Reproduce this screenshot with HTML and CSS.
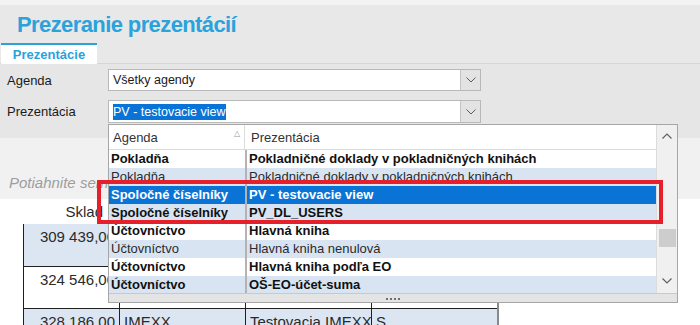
FILE: index.html
```html
<!DOCTYPE html>
<html lang="sk">
<head>
  <meta charset="UTF-8" />
  <title>Prezeranie prezentácií</title>
  <link rel="stylesheet" href="styles.css">
</head>
<body>

  <div class="topstrip"></div>
  <header class="titlebar">
    <h1>Prezeranie prezentácií</h1>
  </header>

  <nav class="tabs">
    <div class="tab">Prezentácie</div>
  </nav>

  <section class="filters">
    <div class="field">
      <label>Agenda</label>
      <div class="combo">
        <span class="combo-text">Všetky agendy</span>
        <span class="combo-btn">
          <svg width="10" height="6" viewBox="0 0 10 6"><polyline points="0.5,0.5 5,5 9.5,0.5" fill="none" stroke="#5a5a5a" stroke-width="1"/></svg>
        </span>
      </div>
    </div>
    <div class="field">
      <label>Prezentácia</label>
      <div class="combo combo-tall">
        <span class="combo-text"><span class="selected-text">PV - testovacie view</span></span>
        <span class="combo-btn">
          <svg width="10" height="6" viewBox="0 0 10 6"><polyline points="0.5,0.5 5,5 9.5,0.5" fill="none" stroke="#5a5a5a" stroke-width="1"/></svg>
        </span>
      </div>
    </div>
  </section>

  <div class="group-panel">Potiahnite sem hlavičku stĺpca pre zoskupenie</div>

  <div class="grid-wrap">
    <table class="grid">
      <colgroup>
        <col class="c-num"><col class="c-txt"><col class="c-txt"><col class="c-txt">
      </colgroup>
      <thead>
        <tr><th class="num-head">Sklad Info</th><th></th><th></th><th></th></tr>
      </thead>
      <tbody>
        <tr class="alt"><td class="num">309 439,00</td><td>IMEXX</td><td>Testovacia IMEXX</td><td>S</td></tr>
        <tr><td class="num">324 546,00</td><td>IMEXX</td><td>Testovacia IMEXX</td><td>S</td></tr>
        <tr class="alt"><td class="num">328 186,00</td><td>IMEXX</td><td>Testovacia IMEXX</td><td>S</td></tr>
      </tbody>
    </table>
  </div>

  <!-- otvoreny zoznam prezentacii -->
  <div class="dropdown">
    <div class="dd-main">
      <div class="dd-list">
        <div class="dd-head">
          <div class="dd-col1">Agenda <span class="sort">&#9651;</span></div>
          <div class="dd-col2">Prezentácia</div>
        </div>
        <div class="dd-row bold">
          <div class="dd-col1">Pokladňa</div><div class="dd-col2">Pokladničné doklady v pokladničných knihách</div>
        </div>
        <div class="dd-row odd">
          <div class="dd-col1">Pokladňa</div><div class="dd-col2">Pokladničné doklady v pokladničných knihách</div>
        </div>
        <div class="dd-row bold active">
          <div class="dd-col1">Spoločné číselníky</div><div class="dd-col2">PV - testovacie view</div>
        </div>
        <div class="dd-row bold odd">
          <div class="dd-col1">Spoločné číselníky</div><div class="dd-col2">PV_DL_USERS</div>
        </div>
        <div class="dd-row bold">
          <div class="dd-col1">Účtovníctvo</div><div class="dd-col2">Hlavná kniha</div>
        </div>
        <div class="dd-row odd">
          <div class="dd-col1">Účtovníctvo</div><div class="dd-col2">Hlavná kniha nenulová</div>
        </div>
        <div class="dd-row bold">
          <div class="dd-col1">Účtovníctvo</div><div class="dd-col2">Hlavná kniha podľa EO</div>
        </div>
        <div class="dd-row bold odd">
          <div class="dd-col1">Účtovníctvo</div><div class="dd-col2">OŠ-EO-účet-suma</div>
        </div>
      </div>
      <div class="scrollbar">
        <svg class="arrow" width="10" height="6" viewBox="0 0 10 6"><polyline points="0.5,5.5 5,1 9.5,5.5" fill="none" stroke="#606060" stroke-width="1.2"/></svg>
        <div class="thumb"></div>
        <svg class="arrow" width="10" height="6" viewBox="0 0 10 6"><polyline points="0.5,0.5 5,5 9.5,0.5" fill="none" stroke="#606060" stroke-width="1.2"/></svg>
      </div>
    </div>
    <div class="dd-foot"><span class="grip"></span></div>
  </div>

  <div class="highlight"></div>

</body>
</html>
```

FILE: styles.css
```css
body {
  margin: 0;
  width: 700px;
  height: 325px;
  overflow: hidden;
  position: relative;
  font-family: "Liberation Sans", Arial, sans-serif;
  background-color: #ffffff;
  color: #1a1a1a;
}

.topstrip {
  height: 5px;
  background-color: #f3f3f3;
}

.titlebar {
  height: 36px;
  box-sizing: border-box;
  padding-top: 3px;
  background-color: #e8e8e8;
}

.titlebar h1 {
  margin: 0;
  padding-left: 17px;
  font-size: 22px;
  line-height: 33px;
  letter-spacing: -0.6px;
  color: #2aa2dc;
}

.tabs {
  height: 22px;
  background-color: #e8e8e8;
  border-bottom: 1px solid #d6d6d6;
  display: flex;
  align-items: flex-end;
}

.tab {
  margin-left: 1px;
  width: 96px;
  height: 21px;
  margin-bottom: -1px;
  box-sizing: border-box;
  border-top: 2px solid #2aa2dc;
  background-color: #ffffff;
  color: #2aa2dc;
  font-weight: bold;
  font-size: 13px;
  line-height: 20px;
  text-align: center;
}

.filters {
  height: 74px;
  box-sizing: border-box;
  padding-top: 5px;
  background-color: #e6e6e6;
  display: flex;
  flex-direction: column;
  gap: 9px;
}

.field {
  display: flex;
  align-items: center;
}

.field label {
  width: 101px;
  padding-left: 7px;
  font-size: 13px;
  color: #1a1a1a;
}

.combo {
  width: 373px;
  height: 22px;
  box-sizing: border-box;
  border: 1px solid #b9b9b9;
  background-color: #ffffff;
  display: flex;
  align-items: center;
}

.combo-tall {
  height: 23px;
}

.combo-text {
  flex: 1;
  padding-left: 4px;
  font-size: 12.5px;
}

.selected-text {
  background-color: #0a74d6;
  color: #ffffff;
  padding: 1px 0;
}

.combo-btn {
  width: 20px;
  height: 100%;
  box-sizing: border-box;
  border-left: 1px solid #c4c4c4;
  background-color: #e3e3e3;
  display: flex;
  align-items: center;
  justify-content: center;
}

.group-panel {
  height: 61px;
  box-sizing: border-box;
  padding: 36px 0 0 9px;
  background-color: #f1f1f1;
  color: #9d9d9d;
  font-style: italic;
  font-size: 15px;
  white-space: nowrap;
}

.grid-wrap {
  padding-left: 23px;
}

.grid {
  border-collapse: collapse;
  table-layout: fixed;
  width: 474px;
  font-size: 15px;
  color: #2a2a2a;
}

.grid col.c-num {
  width: 96px;
}

.grid col.c-txt {
  width: 126px;
}

.grid th {
  height: 25px;
  padding: 0;
  font-weight: normal;
  text-align: left;
  white-space: nowrap;
  overflow: hidden;
}

.grid th.num-head {
  padding-left: 42px;
}

.grid td {
  height: 42px;
  padding: 4px 0 0 4px;
  vertical-align: top;
  border-left: 1px solid #1f1f1f;
  border-bottom: 1px solid #1f1f1f;
  box-sizing: border-box;
  white-space: nowrap;
  overflow: hidden;
}

.grid td:last-child {
  border-right: 2px solid #8a8a8a;
}

.grid td.num {
  text-align: right;
  padding: 4px 4px 0 0;
}

.grid tr.alt td {
  background-color: #dce6f3;
}

.dropdown {
  position: absolute;
  left: 108px;
  top: 124px;
  width: 570px;
  height: 179px;
  box-sizing: border-box;
  border: 1px solid #a6a6a6;
  background-color: #ffffff;
  display: flex;
  flex-direction: column;
  font-size: 13px;
}

.dd-main {
  display: flex;
  height: 168px;
}

.dd-list {
  width: 548px;
  overflow: hidden;
}

.dd-head {
  height: 24px;
  display: flex;
  align-items: center;
  border-bottom: 1px solid #dadada;
  color: #333333;
}

.dd-head .dd-col1 {
  width: 131px;
  padding-left: 4px;
  border-right: 1px solid #dcdcdc;
  height: 100%;
  display: flex;
  align-items: center;
  position: relative;
}

.dd-head .dd-col2 {
  padding-left: 6px;
}

.sort {
  position: absolute;
  right: 4px;
  top: 4px;
  font-size: 8px;
  color: #9a9a9a;
}

.dd-row {
  height: 18px;
  display: flex;
  line-height: 18px;
  white-space: nowrap;
  color: #2b2b2b;
}

.dd-row.bold {
  font-weight: bold;
  color: #111111;
}

.dd-row.odd {
  background-color: #d8e4f2;
}

.dd-row.active {
  background-color: #0a74d6;
  color: #ffffff;
}

.dd-row .dd-col1 {
  width: 134px;
  padding-left: 2px;
  overflow: hidden;
}

.dd-row .dd-col2 {
  flex: 1;
  padding-left: 2px;
  border-left: 2px solid #b3b3b3;
  overflow: hidden;
}

.scrollbar {
  width: 20px;
  border-left: 1px solid #dcdcdc;
  background-color: #f0f0f0;
  display: flex;
  flex-direction: column;
  align-items: center;
}

.scrollbar .arrow {
  margin-top: 8px;
}

.thumb {
  width: 17px;
  height: 18px;
  margin-top: 90px;
  background-color: #cdcdcd;
}

.scrollbar .arrow:last-child {
  margin-top: 31px;
}

.dd-foot {
  flex: 1;
  border-top: 1px solid #c9c9c9;
  background-color: #e4e4e4;
  display: flex;
  justify-content: center;
}

.grip {
  margin-top: 4px;
  width: 17px;
  height: 2px;
  background-image: radial-gradient(circle, #6f6f6f 0.8px, transparent 1px);
  background-size: 4px 2px;
}

.highlight {
  position: absolute;
  left: 97px;
  top: 180px;
  width: 566px;
  height: 44px;
  box-sizing: border-box;
  border: 4px solid #e5202a;
}
```
